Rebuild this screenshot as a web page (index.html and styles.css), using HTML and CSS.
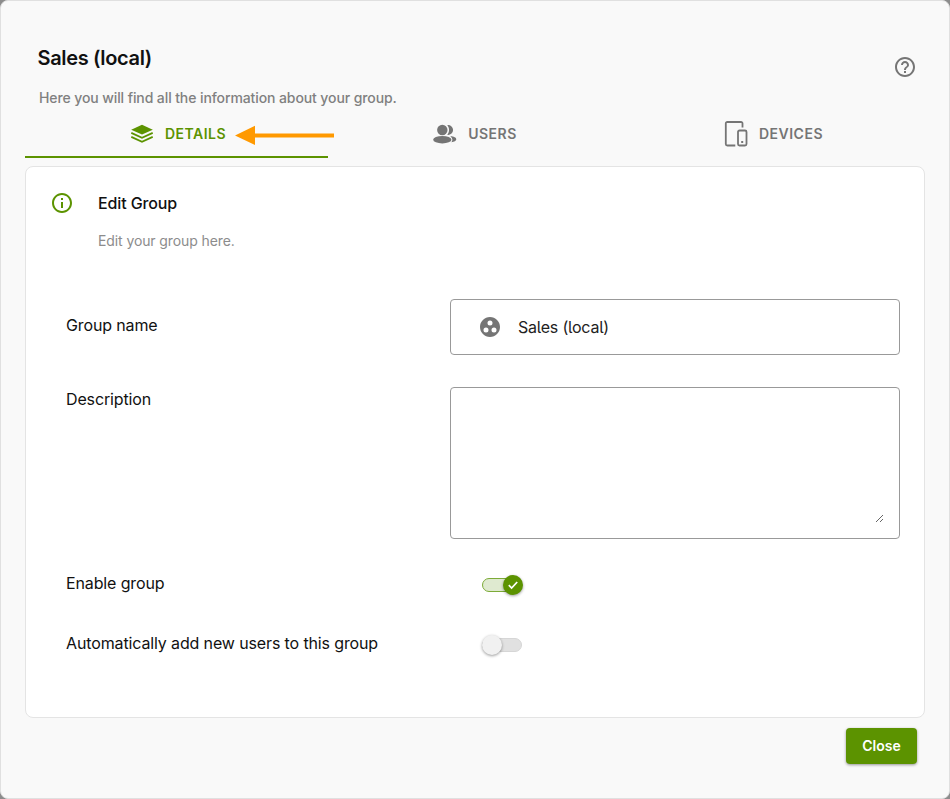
FILE: index.html
```html
<!DOCTYPE html>
<html lang="en">
<head>
    <meta charset="UTF-8">
    <meta name="viewport" content="width=device-width, initial-scale=1.0">
    <title>Sales (local)</title>
    <link rel="stylesheet" href="styles.css">
</head>
<body>

<div class="dialog">
    <div class="header">
        <div>
            <h1 class="title">Sales (local)</h1>
            <p class="subtitle">Here you will find all the information about your group.</p>
        </div>
        <svg class="help" viewBox="0 0 24 24"><path d="M11 18h2v-2h-2v2zm1-16C6.480 2 2 6.480 2 12s4.480 10 10 10 10-4.480 10-10S17.520 2 12 2zm0 18c-4.410 0-8-3.590-8-8s3.590-8 8-8 8 3.590 8 8-3.590 8-8 8zm0-14c-2.210 0-4 1.790-4 4h2c0-1.100.9-2 2-2s2 .9 2 2c0 2-3 1.750-3 5h2c0-2.250 3-2.500 3-5 0-2.210-1.790-4-4-4z"/></svg>
    </div>

    <div class="tabs">
        <div class="tab active">
            <svg class="tab-icon" viewBox="0 0 24 24">
                <path d="M12 2.800L1.200 7.700 12 12.600 22.800 7.700z"/>
                <path class="line" d="M1.300 10.900L12 15.700 22.700 10.900M1.300 14.900L12 19.700 22.700 14.900"/>
            </svg>
            <span>DETAILS</span>
            <svg class="arrow" viewBox="0 0 100 20"><path d="M0 10.500L20 .7V8.500H99V12.500H20V20z"/></svg>
        </div>
        <div class="tab">
            <svg class="tab-icon" viewBox="0 0 24 24">
                <circle cx="9.300" cy="8" r="5.200"/>
                <ellipse cx="9.300" cy="17.700" rx="9.100" ry="3.700"/>
                <path d="M14.200 3.200a4.900 4.900 0 1 1 0 9.600c2.500-2.700 2.500-6.900 0-9.600zM17.300 14.200c3.600.1 6 1.400 6 3 0 1.500-2 2.700-4.900 3 1.500-1.700 1.400-4.300-1.100-6z"/>
            </svg>
            <span>USERS</span>
        </div>
        <div class="tab">
            <svg class="tab-icon" viewBox="0 0 24 24">
                <path class="line" d="M18.500 5.500V1.500a1.500 1.500 0 0 0-1.500-1.500H3.300a1.500 1.500 0 0 0-1.500 1.500v20.500a1.500 1.500 0 0 0 1.500 1.500h8"/>
                <rect class="line" x="14" y="8.500" width="8.500" height="15" rx="1.500"/>
                <path d="M17.200 19h2v2h-2z"/>
            </svg>
            <span>DEVICES</span>
        </div>
    </div>

    <div class="card">
        <div class="card-head">
            <svg class="info" viewBox="0 0 24 24"><path d="M11 7h2v2h-2zm0 4h2v6h-2zm1-9C6.480 2 2 6.480 2 12s4.480 10 10 10 10-4.480 10-10S17.520 2 12 2zm0 18c-4.410 0-8-3.590-8-8s3.590-8 8-8 8 3.590 8 8-3.590 8-8 8z"/></svg>
            <div>
                <h2 class="card-title">Edit Group</h2>
                <p class="card-text">Edit your group here.</p>
            </div>
        </div>

        <div class="form">
            <label class="label" for="groupName">Group name</label>
            <div class="field">
                <svg class="group-icon" viewBox="0 0 24 24"><path fill-rule="evenodd" d="M12 2C6.480 2 2 6.480 2 12s4.480 10 10 10 10-4.480 10-10S17.520 2 12 2zM8 17.500a2.500 2.500 0 0 1 0-5 2.500 2.500 0 0 1 0 5zM9.500 8a2.500 2.500 0 0 1 5 0 2.500 2.500 0 0 1-5 0zm6.500 9.500a2.500 2.500 0 0 1 0-5 2.500 2.500 0 0 1 0 5z"/></svg>
                <input type="text" class="input" id="groupName" value="Sales (local)">
            </div>

            <label class="label" for="description">Description</label>
            <div class="field area">
                <textarea class="textarea" id="description"></textarea>
            </div>

            <span class="label">Enable group</span>
            <div class="switch on">
                <span class="knob"><svg viewBox="0 0 12 12"><path d="M1.800 6.200L4.600 9 10.200 3"/></svg></span>
            </div>

            <span class="label">Automatically add new users to this group</span>
            <div class="switch">
                <span class="knob"></span>
            </div>
        </div>
    </div>

    <div class="footer">
        <button class="button">Close</button>
    </div>
</div>

</body>
</html>
```
FILE: styles.css
```css
* {
    box-sizing: border-box;
}

body {
    margin: 0;
    background-color: #8c8c8c;
    font-family: Inter, sans-serif;
    color: #111;
}

h1, h2, p {
    margin: 0;
}

svg {
    display: block;
    fill: currentColor;
}

.dialog {
    height: 799px;
    padding: 0 24px;
    border: 1px solid #e0e0e0;
    border-radius: 8px;
    background-color: #f9f9f9;
}

.header {
    display: flex;
    justify-content: space-between;
    height: 108px;
    padding: 45px 8px 0 12px;
}

.title {
    margin-left: 0.5px;
    font-size: 20px;
    font-weight: 600;
    line-height: 24px;
    letter-spacing: -0.35px;
}

.subtitle {
    margin: 18px 0 0 2px;
    font-size: 14px;
    font-weight: 450;
    line-height: 20px;
    letter-spacing: -0.1px;
    color: #808080;
}

.help {
    width: 24px;
    height: 24px;
    margin-top: 9px;
    color: #757575;
}

.tabs {
    display: grid;
    grid-template-columns: 303px 1fr 303px;
    height: 49px;
}

.tab {
    position: relative;
    display: flex;
    align-items: center;
    justify-content: center;
    gap: 11px;
    padding-top: 2px;
    border-bottom: 2px solid transparent;
    font-size: 14px;
    font-weight: 600;
    letter-spacing: 0.5px;
    color: #757575;
}

.tab.active {
    padding-left: 3px;
    border-color: #5c9300;
    color: #5c9300;
}

.tab-icon {
    width: 24px;
    height: 24px;
    overflow: visible;
}

.tab-icon .line {
    fill: none;
    stroke: currentColor;
    stroke-width: 1.8;
}

.arrow {
    position: absolute;
    left: 210px;
    top: 16px;
    width: 100px;
    height: 20px;
    color: #ff9900;
}

.card {
    height: 552px;
    margin-top: 8px;
    padding: 24px;
    border: 1px solid #e4e4e4;
    border-radius: 8px;
    background-color: #fff;
}

.card-head {
    display: flex;
    gap: 24px;
}

.info {
    width: 24px;
    height: 24px;
    color: #5c9300;
}

.card-title {
    font-size: 16px;
    font-weight: 500;
    line-height: 24px;
    letter-spacing: -0.12px;
}

.card-text {
    margin-top: 16px;
    font-size: 14px;
    line-height: 20px;
    letter-spacing: -0.1px;
    color: #8c8c8c;
}

.form {
    display: grid;
    grid-template-columns: 384px 450px;
    grid-template-rows: 56px 152px 28px 28px;
    row-gap: 32px;
    margin: 48px 0 0 16px;
}

.label {
    padding-top: 14px;
    font-size: 16px;
    line-height: 24px;
    letter-spacing: -0.13px;
}

.label[for="description"],
span.label {
    padding-top: 0;
}

.field {
    display: flex;
    align-items: center;
    padding: 0 15px 0 27px;
    border: 1px solid #999;
    border-radius: 4px;
}

.group-icon {
    width: 24px;
    height: 24px;
    color: #757575;
}

.input {
    width: 300px;
    margin-left: 16px;
    padding: 0;
    border: none;
    outline: none;
    background: none;
    font: 16px Inter, sans-serif;
    font-feature-settings: "cv05";
    letter-spacing: -0.22px;
    color: #222;
}

.field.area {
    padding: 15px;
}

.textarea {
    width: 100%;
    height: 120px;
    border: none;
    outline: none;
    resize: vertical;
}

.switch {
    position: relative;
    width: 40px;
    height: 14px;
    margin: 7px 0 0 32px;
    border: 1px solid #d6d6d6;
    border-radius: 7px;
    background-color: #e1e1e1;
}

.switch.on {
    border-color: #7dab38;
    background-color: #dfead0;
}

.knob {
    position: absolute;
    left: -1px;
    top: -4px;
    display: flex;
    align-items: center;
    justify-content: center;
    width: 20px;
    height: 20px;
    border-radius: 50%;
    background-color: #f1f1f1;
    box-shadow: 0 1px 3px rgba(0, 0, 0, 0.4);
}

.switch.on .knob {
    left: 20px;
    background-color: #5c9300;
}

.knob svg {
    width: 12px;
    height: 12px;
    fill: none;
    stroke: #fff;
    stroke-width: 1.7;
}

.footer {
    display: flex;
    justify-content: flex-end;
    padding: 10px 8px 0 0;
}

.button {
    width: 71px;
    height: 36px;
    padding: 0 0 1px;
    border: none;
    border-radius: 4px;
    background-color: #5c9300;
    box-shadow: 0 1px 3px rgba(0, 0, 0, 0.4);
    color: white;
    font: 600 14px Inter, sans-serif;
    cursor: pointer;
}
```
